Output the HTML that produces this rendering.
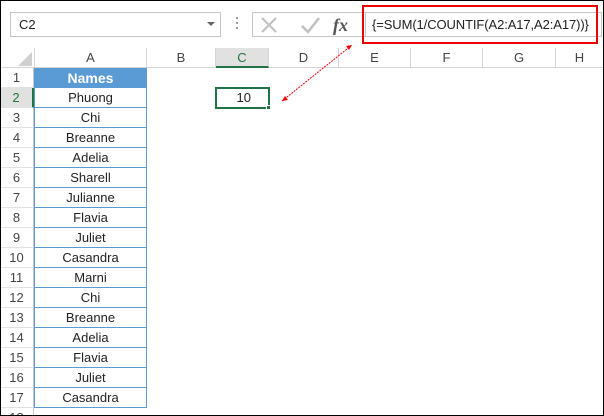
<!DOCTYPE html><html><head><style>
*{margin:0;padding:0;box-sizing:border-box}
html,body{width:604px;height:416px;overflow:hidden}
body{position:relative;background:#fff;font-family:"Liberation Sans",sans-serif}
.a{position:absolute}
.hd{position:absolute;top:48px;height:20px;font-size:13px;color:#444;text-align:center;line-height:20px;border-right:1px solid #d4d4d4;border-bottom:1px solid #d4d4d4}
.rh{position:absolute;left:0;width:34px;height:20px;font-size:13px;color:#444;text-align:center;line-height:20px;border-right:1px solid #c6c6c6;border-bottom:1px solid #e1e1e1;overflow:hidden}
.c{position:absolute;left:34px;width:113px;height:20px;font-size:13px;color:#222;text-align:center;line-height:20px;border:1px solid #5b9bd5;border-top:none}
</style></head><body>
<div class="a" style="left:0;top:0;width:604px;height:416px;border:1px solid #000;z-index:9"></div>
<div class="a" style="left:10px;top:12px;width:211px;height:25px;border:1px solid #c6c6c6;font-size:13px;line-height:23px;padding-left:8px;color:#222">C2</div>
<div class="a" style="left:207px;top:22px;width:0;height:0;border-left:4px solid transparent;border-right:4px solid transparent;border-top:4px solid #666"></div>
<div class="a" style="left:236px;top:17px;width:2px;height:2px;background:#999;box-shadow:0 5px #999,0 10px #999"></div>
<div class="a" style="left:252px;top:12px;width:350px;height:25px;border:1px solid #c6c6c6"></div>
<svg class="a" style="left:258px;top:14px" width="90" height="22"><path d="M4 4L18 18M18 4L4 18" stroke="#c0c0c0" stroke-width="2"/><path d="M44 12L50 18L61 4" stroke="#c0c0c0" stroke-width="2.5" fill="none"/><text x="75" y="17" font-family="Liberation Serif" font-style="italic" font-weight="bold" font-size="18" fill="#555">fx</text></svg>
<div class="a" style="left:362px;top:5px;width:236px;height:39px;border:2px solid #e00"></div>
<div class="a" style="left:365px;top:12px;font-size:13px;line-height:25px;color:#222;padding-left:6px;border-left:1px solid #c6c6c6;letter-spacing:-0.1px">{=SUM(1/COUNTIF(A2:A17,A2:A17))}</div>
<div class="hd" style="left:0;width:35px"></div>
<svg class="a" style="left:18px;top:52px" width="14" height="14"><path d="M14 0L14 14L0 14Z" fill="#d0d0d0"/></svg>
<div class="hd" style="left:35px;width:112px">A</div>
<div class="hd" style="left:147px;width:69px">B</div>
<div class="hd" style="left:216px;width:53px;background:#e1e1e1;border-bottom:2px solid #217346;color:#217346">C</div>
<div class="hd" style="left:269px;width:70px">D</div>
<div class="hd" style="left:339px;width:72px">E</div>
<div class="hd" style="left:411px;width:72px">F</div>
<div class="hd" style="left:483px;width:73px">G</div>
<div class="hd" style="left:556px;width:48px">H</div>
<div class="rh" style="top:68px">1</div>
<div class="rh" style="top:88px;background:#e1e1e1;color:#217346;border-right:2px solid #217346">2</div>
<div class="rh" style="top:108px">3</div><div class="rh" style="top:128px">4</div><div class="rh" style="top:148px">5</div><div class="rh" style="top:168px">6</div><div class="rh" style="top:188px">7</div><div class="rh" style="top:208px">8</div><div class="rh" style="top:228px">9</div><div class="rh" style="top:248px">10</div><div class="rh" style="top:268px">11</div><div class="rh" style="top:288px">12</div><div class="rh" style="top:308px">13</div><div class="rh" style="top:328px">14</div><div class="rh" style="top:348px">15</div><div class="rh" style="top:368px">16</div><div class="rh" style="top:388px">17</div><div class="rh" style="top:408px;height:8px;border-bottom:none">18</div>
<div class="c" style="top:68px;background:#5b9bd5;color:#fff;font-weight:bold;font-size:14px">Names</div>
<div class="c" style="top:88px">Phuong</div><div class="c" style="top:108px">Chi</div><div class="c" style="top:128px">Breanne</div><div class="c" style="top:148px">Adelia</div><div class="c" style="top:168px">Sharell</div><div class="c" style="top:188px">Julianne</div><div class="c" style="top:208px">Flavia</div><div class="c" style="top:228px">Juliet</div><div class="c" style="top:248px">Casandra</div><div class="c" style="top:268px">Marni</div><div class="c" style="top:288px">Chi</div><div class="c" style="top:308px">Breanne</div><div class="c" style="top:328px">Adelia</div><div class="c" style="top:348px">Flavia</div><div class="c" style="top:368px">Juliet</div><div class="c" style="top:388px">Casandra</div>
<div class="a" style="left:215px;top:87px;width:55px;height:22px;border:2px solid #217346;font-size:13px;text-align:right;padding-right:17px;line-height:18px;color:#222">10</div>
<div class="a" style="left:266px;top:105px;width:5px;height:5px;background:#217346;border:1px solid #fff"></div>
<svg class="a" style="left:0;top:0" width="604" height="416"><path d="M282 101L352 45" stroke="#e00" stroke-width="1" stroke-dasharray="2 1"/><path d="M352 45L346 46L349 50Z" fill="#e00"/><path d="M282 101L288 100L285 96Z" fill="#e00"/></svg>
</body></html>
